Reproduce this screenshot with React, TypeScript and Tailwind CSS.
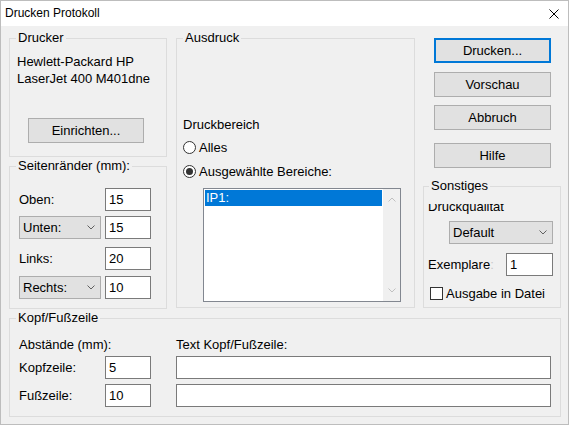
import React from "react";

const font = "font-['Liberation_Sans',Arial,sans-serif]";

function GroupBox({
  title,
  className,
  legendClass = "ml-[6px]",
  children,
}: {
  title: string;
  className: string;
  legendClass?: string;
  children?: React.ReactNode;
}) {
  return (
    <fieldset className={`m-0 min-w-0 border border-[#dcdcdc] p-0 ${className}`}>
      <legend className={`px-[2px] leading-[16px] ${legendClass}`}>{title}</legend>
      {children}
    </fieldset>
  );
}

function Chevron({ up = false, color = "#606060" }: { up?: boolean; color?: string }) {
  return (
    <svg width="8" height="5" viewBox="0 0 8 5">
      <polyline
        points={up ? "0.5,4.5 4,1 7.5,4.5" : "0.5,0.5 4,4 7.5,0.5"}
        fill="none"
        stroke={color}
        strokeWidth="1"
      />
    </svg>
  );
}

function TextBox({ value = "", className }: { value?: string; className: string }) {
  return (
    <div className={`flex h-[23px] items-center border border-[#7a7a7a] bg-white pl-[3px] ${className}`}>
      {value}
    </div>
  );
}

function Combo({ label, className }: { label: string; className: string }) {
  return (
    <div
      className={`flex h-[23px] items-center justify-between border border-[#adadad] bg-[#e1e1e1] pl-[3px] pr-[5px] ${className}`}
    >
      <span>{label}</span>
      <Chevron />
    </div>
  );
}

function Button({ label, primary = false, className = "" }: { label: string; primary?: boolean; className?: string }) {
  return (
    <div
      className={`flex h-[25px] w-[117px] items-center justify-center bg-[#e1e1e1] ${
        primary ? "border-2 border-[#0078d7]" : "border border-[#adadad]"
      } ${className}`}
    >
      {label}
    </div>
  );
}

function Radio({ checked, label, className }: { checked?: boolean; label: string; className: string }) {
  return (
    <div className={`flex h-[17px] items-center gap-[3px] ${className}`}>
      <span className="flex h-[13px] w-[13px] items-center justify-center rounded-full border border-[#333333] bg-white">
        {checked && <span className="h-[7px] w-[7px] rounded-full bg-[#333333]" />}
      </span>
      <span>{label}</span>
    </div>
  );
}

export default function App() {
  return (
    <div className="h-[425px] w-[570px] bg-white">
      <div
        className={`flex h-[425px] w-[569px] flex-col border border-[#bdbdbd] bg-[#f0f0f0] text-[13px] leading-[17px] text-black ${font}`}
      >
        {/* Title bar */}
        <div className="flex h-[25px] shrink-0 items-center justify-between bg-white pl-[4px] pr-[9px] text-[12px]">
          <span>Drucken Protokoll</span>
          <svg width="10" height="10" viewBox="0 0 10 10">
            <path d="M0.5 0.5 L9.5 9.5 M9.5 0.5 L0.5 9.5" stroke="#000" strokeWidth="1" />
          </svg>
        </div>

        <div className="flex-1 pl-[8px] pt-[4px]">
          <div className="flex items-start">
            {/* Left column */}
            <div className="flex w-[158px] flex-col gap-[1px]">
              <GroupBox title="Drucker" className="h-[127px]">
                <div className="pl-[7px] pt-[7px]">
                  Hewlett-Packard HP
                  <br />
                  LaserJet 400 M401dne
                </div>
                <div className="ml-[18px] mt-[31px] flex h-[25px] w-[116px] items-center justify-center border border-[#adadad] bg-[#e1e1e1]">
                  Einrichten...
                </div>
              </GroupBox>

              <GroupBox title="Seitenränder (mm):" className="h-[151px]">
                <div className="flex flex-col pl-[9px]">
                  <div className="mt-[14px] flex h-[23px] items-center gap-[4px]">
                    <div className="w-[82px]">Oben:</div>
                    <TextBox value="15" className="w-[46px]" />
                  </div>
                  <div className="mt-[5px] flex h-[23px] items-center gap-[4px]">
                    <Combo label="Unten:" className="w-[82px]" />
                    <TextBox value="15" className="w-[46px]" />
                  </div>
                  <div className="mt-[8px] flex h-[23px] items-center gap-[4px]">
                    <div className="w-[82px]">Links:</div>
                    <TextBox value="20" className="w-[46px]" />
                  </div>
                  <div className="mt-[6px] flex h-[23px] items-center gap-[4px]">
                    <Combo label="Rechts:" className="w-[82px]" />
                    <TextBox value="10" className="w-[46px]" />
                  </div>
                </div>
              </GroupBox>
            </div>

            {/* Middle column */}
            <GroupBox title="Ausdruck" className="ml-[9px] h-[278px] w-[239px]">
              <div className="flex flex-col pl-[6px]">
                <div className="mt-[70px]">Druckbereich</div>
                <Radio label="Alles" className="mt-[6px]" />
                <Radio checked label="Ausgewählte Bereiche:" className="mt-[7px]" />
                <div className="ml-[20px] mt-[8px] flex h-[114px] w-[198px] border border-[#828790] bg-white">
                  <div className="flex-1 p-[1px]">
                    <div className="h-[16px] bg-[#0078d7] pl-[1px] leading-[16px] text-white">IP1:</div>
                  </div>
                  <div className="flex w-[17px] flex-col items-center justify-between bg-[#f0f0f0] py-[8px]">
                    <Chevron up color="#c0c0c0" />
                    <Chevron color="#c0c0c0" />
                  </div>
                </div>
              </div>
            </GroupBox>

            {/* Right column */}
            <div className="ml-[8px] flex w-[138px] flex-col">
              <div className="ml-[11px] flex flex-col">
                <Button label="Drucken..." primary className="mt-[8px]" />
                <Button label="Vorschau" className="mt-[9px]" />
                <Button label="Abbruch" className="mt-[8px]" />
                <Button label="Hilfe" className="mt-[13px]" />
              </div>
              <GroupBox title="Sonstiges" legendClass="ml-[5px]" className="mt-[10px] h-[130px] w-[138px]">
                <div className="flex flex-col pl-[4px]">
                  <div className="mt-[10px] h-[11px] overflow-hidden">
                    <div className="-mt-[5px] leading-[15px]">Druckqualität</div>
                  </div>
                  <Combo label="Default" className="ml-[21px] mt-[6px] w-[104px]" />
                  <div className="mt-[9px] flex h-[23px] items-center">
                    <div className="w-[78px]">
                      Exemplare<span className="text-[#c8c8c8]">:</span>
                    </div>
                    <TextBox value="1" className="w-[47px]" />
                  </div>
                  <div className="mt-[9px] flex h-[17px] items-center gap-[3px] pl-[2px]">
                    <span className="h-[13px] w-[13px] border border-[#333333] bg-white" />
                    <span>Ausgabe in Datei</span>
                  </div>
                </div>
              </GroupBox>
            </div>
          </div>

          {/* Kopf/Fußzeile */}
          <GroupBox title="Kopf/Fußzeile" className="mt-[1px] h-[107px] w-[552px]">
            <div className="flex flex-col pl-[9px]">
              <div className="mt-[10px] flex h-[17px] items-center">
                <div className="w-[157px]">Abstände (mm):</div>
                <div>Text Kopf/Fußzeile:</div>
              </div>
              <div className="mt-[3px] flex h-[23px] items-center">
                <div className="w-[86px]">Kopfzeile:</div>
                <TextBox value="5" className="w-[46px]" />
                <TextBox className="ml-[25px] w-[375px]" />
              </div>
              <div className="mt-[5px] flex h-[23px] items-center">
                <div className="w-[86px]">Fußzeile:</div>
                <TextBox value="10" className="w-[46px]" />
                <TextBox className="ml-[25px] w-[375px]" />
              </div>
            </div>
          </GroupBox>
        </div>
      </div>
    </div>
  );
}
